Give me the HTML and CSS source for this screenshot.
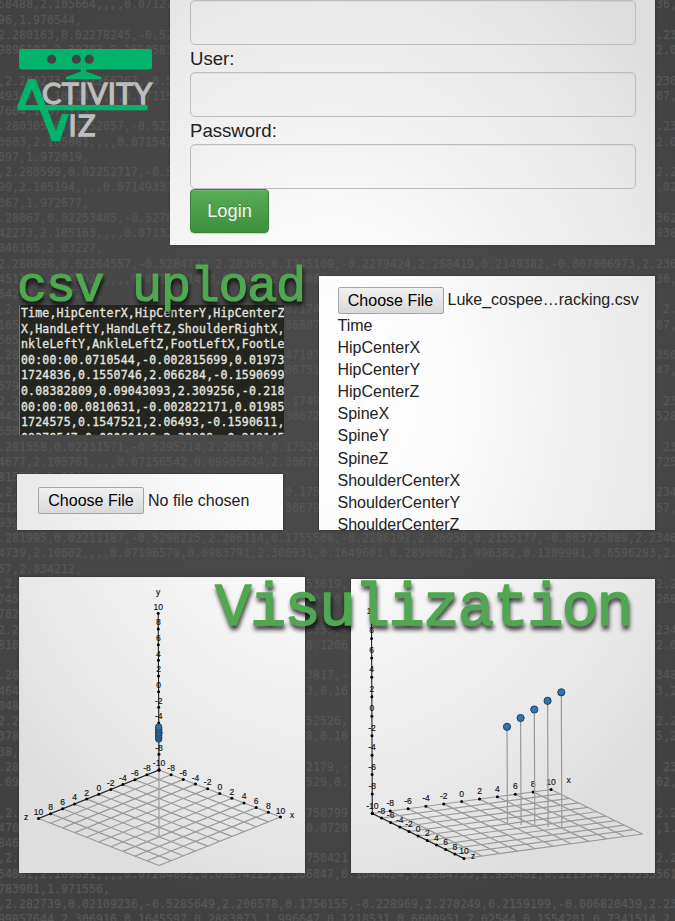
FILE: index.html
```html
<!DOCTYPE html>
<html lang="en">
<head>
<meta charset="utf-8">
<title>Activity Viz</title>
<link rel="stylesheet" href="styles.css">
</head>
<body>
<pre class="backdrop" id="backdrop" aria-hidden="true"></pre>
<main class="page">
  <header class="top">
    <svg class="logo" viewBox="0 0 170 244" width="170" height="244">
      <g fill="#02b36c">
        <rect x="19" y="49" width="133" height="20.5" rx="2.5"/>
        <path d="M81 69H86V71.5L101 77V79.3H66V77L81 71.5Z"/>
        <path d="M17.5 106L28 79H35.5L56 131L62 114H69L60 141H52L31.7 89L24 108Z"/>
        <rect x="17.5" y="105" width="130" height="5.3"/>
      </g>
      <g fill="#444"><circle cx="51.7" cy="59.2" r="4.5"/><circle cx="76.3" cy="59.2" r="4.5"/><circle cx="89.3" cy="59.2" r="4.5"/></g>
      <text class="logo-text" x="42" y="103.7" textLength="110">CTIVITY</text>
      <text class="logo-text" x="68.5" y="136" textLength="27">IZ</text>
    </svg>
    <form class="panel login">
      <div class="field"></div>
      <label>User:</label>
      <div class="field"></div>
      <label>Password:</label>
      <div class="field"></div>
      <button type="button" class="login-button">Login</button>
    </form>
  </header>

  <section class="upload">
    <svg class="heading upload-heading" width="310" height="70"><text x="17" y="52" textLength="289">csv upload</text></svg>
    <div class="upload-left">
      <pre class="code">Time,HipCenterX,HipCenterY,HipCenterZ
X,HandLeftY,HandLeftZ,ShoulderRightX,
nkleLeftY,AnkleLeftZ,FootLeftX,FootLe
00:00:00.0710544,-0.002815699,0.01973
1724836,0.1550746,2.066284,-0.1590699
0.08382809,0.09043093,2.309256,-0.218
00:00:00.0810631,-0.002822171,0.01985
1724575,0.1547521,2.06493,-0.1590611,
08379547,0.09060496,2.30909,-0.218145</pre>
      <div class="panel file-empty"><span class="choose">Choose File</span><span>No file chosen</span></div>
    </div>
    <div class="panel file-list">
      <div class="file-row"><span class="choose">Choose File</span><span>Luke_cospee…racking.csv</span></div>
      <ul>
        <li>Time</li><li>HipCenterX</li><li>HipCenterY</li><li>HipCenterZ</li>
        <li>SpineX</li><li>SpineY</li><li>SpineZ</li>
        <li>ShoulderCenterX</li><li>ShoulderCenterY</li><li>ShoulderCenterZ</li>
      </ul>
    </div>
  </section>

  <section class="charts">
    <svg class="panel chart-a" id="chartA" viewBox="19 577 286 296" width="286" height="296"></svg>
    <svg class="panel chart-b" id="chartB" viewBox="351 579 304 294" width="304" height="294"></svg>
    <svg class="heading chart-heading" width="440" height="80"><text x="5" y="56" textLength="418">Visulization</text></svg>
  </section>
</main>
<script src="script.js"></script>
</body>
</html>
```
FILE: styles.css
```css
* { box-sizing: border-box; }

body {
  margin: 0;
  width: 675px;
  height: 921px;
  position: relative;
  overflow: hidden;
  background: radial-gradient(ellipse 500px 560px at 330px 400px, #4a4a4a, #474747 60%, #404040);
  font-family: "Liberation Sans", Arial, sans-serif;
  color: #222;
}

.backdrop {
  position: absolute;
  left: -2px;
  top: -2.6px;
  margin: 0;
  color: #575757;
  font: 11.5px/15.25px "DejaVu Sans Mono", monospace;
  letter-spacing: 0.077px;
  -webkit-text-stroke: 0.25px #575757;
}

.page { position: relative; }

.panel {
  background: radial-gradient(ellipse 420px 520px at 330px 400px, #fff, #fbfbfb 30%, #e8e8e8 80%, #dedede) fixed;
  box-shadow: 0 0 2px rgba(0, 0, 0, 0.5);
}

.top { display: flex; height: 244px; }
.logo { flex: none; }
.logo-text { font: 29px Lato, sans-serif; fill: #bdbdbd; stroke: #bdbdbd; stroke-width: 1.3px; }

.login { width: 485px; padding: 0 19px 0 20px; font-size: 18.6px; height: 244.5px; }
.login .field { height: 45px; border: 1px solid #bdbdbd; border-radius: 5px; box-shadow: inset 0 1px 1px rgba(0, 0, 0, 0.06); }
.login label { display: block; height: 27px; line-height: 28px; }
.login-button {
  display: block;
  width: 79px;
  height: 44px;
  padding: 0;
  border: 1px solid #398439;
  border-radius: 4px;
  background: linear-gradient(#58ad57, #3e8f3e);
  box-shadow: inset 0 1px 0 rgba(255, 255, 255, 0.15), 0 1px 1px rgba(0, 0, 0, 0.15);
  color: #f4f4f4;
  font: 18.3px "Liberation Sans", Arial, sans-serif;
  text-shadow: 0 -1px 0 rgba(0, 0, 0, 0.2);
}

.heading { position: absolute; overflow: visible; z-index: 2; filter: drop-shadow(1px 4px 2px rgba(0, 0, 0, 0.75)); }
.heading text {
  font-family: "Liberation Mono", monospace;
  fill: #4fa84f;
  stroke: #4fa84f;
  stroke-linejoin: round;
  stroke-width: 1.2px;
}

.upload { position: relative; display: flex; justify-content: space-between; margin-top: 32px; padding: 0 20px 0 17px; height: 254px; }
.upload-heading { left: 0; top: -27px; }
.upload-heading text { font-size: 50px; }
.upload-left { display: flex; flex-direction: column; justify-content: space-between; width: 267px; padding-top: 29px; }
.code {
  width: 265px;
  height: 130px;
  margin: 0 0 0 2px;
  padding: 1px 0 0 1px;
  overflow: hidden;
  border-left: 1px solid #777;
  background: #24251f;
  color: #e6e6e0;
  font: 11.5px/15.6px "DejaVu Sans Mono", monospace;
  letter-spacing: 0.2px;
  -webkit-text-stroke: 0.3px #e6e6e0;
}
.file-empty { display: flex; align-items: center; gap: 4px; width: 266px; height: 56px; padding: 0 0 3px 21px; font-size: 16px; }
.choose {
  width: 106px;
  height: 27px;
  border: 1px solid #a5a5a5;
  border-radius: 2px;
  background: linear-gradient(#f1f1f1, #d9d9d9);
  color: #000;
  text-align: center;
  line-height: 26px;
}
.file-list { width: 336.5px; padding: 11px 0 0 19px; overflow: hidden; font-size: 16px; }
.file-row { display: flex; gap: 4px; line-height: 26px; }
.file-list ul { list-style: none; margin: 0.6px 0 0; padding: 0; }
.file-list li { line-height: 22.15px; }

.charts { position: relative; display: flex; justify-content: space-between; align-items: flex-end; height: 296px; margin-top: 47px; padding: 0 20px 0 19px; }
.chart-heading { left: 210px; top: -8px; }
.chart-heading text { font-size: 61px; stroke-width: 1.4px; }

.grid { fill: none; stroke: #999; stroke-width: 1.2; }
.axis { fill: none; stroke: #222; stroke-width: 1.1; }
.tick { fill: #000; }
.point { fill: #3672a8; stroke: #1b4264; stroke-width: 1; }
.mark { font: 8.5px "Liberation Sans", Arial, sans-serif; fill: #111; stroke: #111; stroke-width: 0.15px; text-anchor: middle; }
```
FILE: script.js
```js
// Backdrop rows: each row is a list of [column, text] pairs.
const rows = [
  [[0, "58488,2.105664,,,,0.07127"], [94, "36,2"]],
  [[0, "96,1.970544,"]],
  [[0, "2.280163,0.02278245,-0.52"], [94, ".236"]],
  [[0, "9896107,2.30783,0.1650581"], [94, "2.00"]],
  [],
  [[0, ",2.280273,0.02266267,-0.5"], [94, "2361"]],
  [[0, "49347,2.105247,,,,0.07115"], [94, "07,2"]],
  [[0, "7664,1.971175,"]],
  [[0, ".280305,0.02252057,-0.527"], [94, ".236"]],
  [[0, "3603,2.105081,,,,0.071547"], [94, "2.00"]],
  [[0, "097,1.972019,"]],
  [[0, ",2.280599,0.02252717,-0.5"], [94, "2.23"]],
  [[0, "99,2.105194,,,,0.07149331"], [94, ".029"]],
  [[0, "367,1.972677,"]],
  [[0, ".28067,0.02253485,-0.5278"], [94, "3628"]],
  [[0, "42273,2.105163,,,,0.07132"], [94, "9387"]],
  [[0, "046165,2.03227,"]],
  [[0, "2.280898,0.02264557,-0.5284722,2.20365,0.1745109,-0.2279424,2.268419,0.2149382,-0.007006973,2.236"]],
  [[0, "451196,2.104929,,,,0.07156114,0.09903012,2.3067"], [94, "36,2"]],
  [[0, "64213,2.034212,"]],
  [[0, ",2."], [41, "0.174"], [94, " 2.2"]],
  [[0, "165"], [41, "06807"], [94, "07,2"]],
  [[0, "565"]],
  [[0, ".28"], [41, "47107"], [94, "3502"]],
  [[0, "817"], [41, "06751"], [94, "47,2"]],
  [[0, "579"]],
  [[0, "2.2"], [41, ".1749"], [94, " 235"]],
  [[0, "443"], [41, "30672"], [94, "528,"]],
  [[0, "550"]],
  [[0, ".281558,0.02231571,-0.5295214,2.205376,0.17524"], [94, " 234"]],
  [[0, "4677,2.105761,,,,0.07156542,0.09905624,2.30671"], [94, "725,"]],
  [[0, "815790,2.034"]],
  [[0, ",2."], [41, "0.1754"], [94, "2342"]],
  [[0, "212"], [41, "306799"], [94, "57,2"]],
  [[0, "939"]],
  [[0, ".281995,0.02211187,-0.5298225,2.206114,0.1755508,-0.2286192,2.26958,0.2155177,-0.003725889,2.2346"]],
  [[0, "4739,2.10602,,,,0.07196579,0.0983791,2.306931,0.1649601,0.2890002,1.996382,0.1209991,0.6596293,2."]],
  [[0, "57,2.034212,"]],
  [[0, ",2."], [44, "53619,"], [94, "2.23"]],
  [[0, "745"], [44, ".00,0"], [94, "268,"]],
  [[0, "782"]],
  [[0, "2.2"], [44, "5355,-"], [94, "2346"]],
  [[0, "816"], [44, "0.1206"], [94, "2.00"]],
  [],
  [[0, ".28"], [44, "3817,-"], [94, "3483"]],
  [[0, "464"], [44, "3,0.16"], [94, "3,2."]],
  [[0, "048"]],
  [[0, "2.2"], [44, "52526,"], [94, "2.23"]],
  [[0, "378"], [44, "8,0.16"], [94, "5,2."]],
  [[0, "38,"]],
  [[0, ".28"], [44, "2179,-"], [94, " 235"]],
  [[0, ".09"], [44, "529,0."], [94, "02,2"]],
  [],
  [[0, ",2."], [44, "750799"], [94, "2.2"]],
  [[0, "470"], [44, "0.0720"], [94, ",1."]],
  [[0, "846"]],
  [[0, ",2."], [44, "750421"], [94, "2.23"]],
  [[0, "54081,2.109891,,,,0.07204802,0.09874225,2.306847,0.1646624,0.2884753,1.996482,0.1219343,0.6595561"]],
  [[0, "783901,1.971556,"]],
  [[0, ",2.282739,0.02109236,-0.5285649,2.206578,0.1750155,-0.228969,2.270249,0.2159199,-0.006820439,2.23"]],
  [[0, "99857644,2.306916,0.1645597,0.2883073,1.996647,0.1218531,0.6600951,2.02544,0.1554201,0.7341514,2."]]
];
document.getElementById("backdrop").textContent = rows
  .map(r => r.reduce((s, [c, t]) => s.padEnd(c) + t, ""))
  .join("\n");

const mix = (a, b, t) => [a[0] + (b[0] - a[0]) * t, a[1] + (b[1] - a[1]) * t];
const line = (a, b, cls) => `<path class="${cls}" d="M${a}L${b}"/>`;
const dot = p => `<circle class="tick" cx="${p[0]}" cy="${p[1]}" r="1.5"/>`;
const mark = (x, y, t) => `<text class="mark" x="${x}" y="${y + 3}">${t}</text>`;

// Floor mesh between four corners: origin o, x end, far corner f, z end.
function floor(o, x, f, z) {
  let s = "";
  for (let i = 0; i <= 10; i++) {
    s += line(mix(o, x, i / 10), mix(z, f, i / 10), "grid");
    s += line(mix(o, z, i / 10), mix(x, f, i / 10), "grid");
  }
  return s;
}
function axis(a, b, dx, dy, from) {
  let s = "";
  for (let i = 0; i <= 10; i++) {
    const p = mix(a, b, i / 10);
    s += dot(p);
    if (i >= from) s += mark(p[0] + dx, p[1] + dy, i * 2 - 10);
  }
  return s;
}

const o1 = [159, 770], x1 = [280.5, 817], f1 = [159, 865.5], z1 = [38.5, 818.5], y1 = [158.2, 613.3];
let a = floor(o1, x1, f1, z1) + line(o1, z1, "axis") + line(o1, [159, 837], "grid") + line(o1, y1, "axis");
a += axis(o1, x1, 0, -6.5, 1) + axis(o1, z1, 0, -6.5, 1) + axis(o1, y1, 0, -6.7, 0);
for (let i = 0; i < 7; i++) a += `<circle class="point" cx="158.7" cy="${739 - i * 2}" r="3.2"/>`;
a += mark(158, 591.5, "y") + mark(26, 816.5, "z") + mark(292, 815, "x");
document.getElementById("chartA").innerHTML = a;

const o2 = [372.3, 813.5], x2 = [551, 789.5], f2 = [642.5, 834], z2 = [464, 858.5], y2 = [371.5, 619];
let b = floor(o2, x2, f2, z2) + line(o2, z2, "axis") + line(o2, y2, "axis");
b += axis(o2, x2, 0, -8, 1) + axis(o2, z2, 0, -7.5, 1) + axis(o2, y2, 0, -8, 0);
[[507, 726.8, 823], [520.6, 718, 825], [534.3, 709.5, 826], [547.6, 700.8, 827], [561.3, 692.3, 828]].forEach(([x, y, base]) => {
  b += line([x, y], [x + 0.5, base], "grid") + `<circle class="point" cx="${x}" cy="${y}" r="3.6"/>`;
});
b += mark(568.5, 780, "x") + mark(473, 856, "z");
document.getElementById("chartB").innerHTML = b;
```
